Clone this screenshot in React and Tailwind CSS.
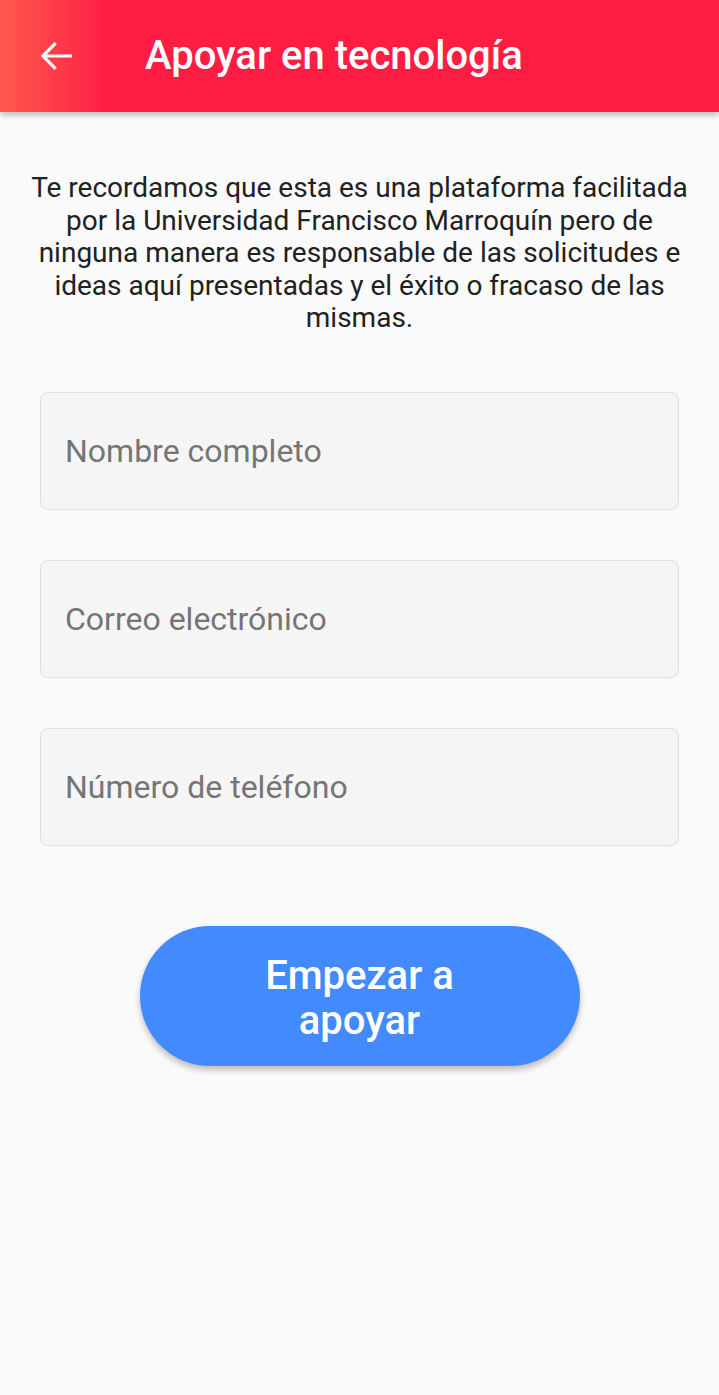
import React from "react";

const Field = ({ label }) => (
  <div className="h-[118px] rounded-[8px] border border-[#e0e0e0] bg-[#f5f5f5] flex items-center px-[24px]">
    <span className="text-[32px] text-[#757575]">{label}</span>
  </div>
);

const App = () => {
  return (
    <div className="min-h-[1395px] bg-[#fafafa] font-['Roboto',sans-serif]">
      <header className="h-[112px] flex items-center bg-[linear-gradient(90deg,#ff5a4c_0px,#ff1d43_110px,#ff1d43_100%)] shadow-[0_3px_6px_rgba(0,0,0,0.25)]">
        <div className="w-[112px] flex justify-center">
          {/* material arrow_back */}
          <svg width="48" height="48" viewBox="0 0 24 24" fill="#fff">
            <path d="M20 11.2H7.3l5.1-5.1-1.15-1.15L4.3 12l6.95 7.05 1.15-1.15-5.1-5.1H20z" />
          </svg>
        </div>
        <h1 className="ml-[33px] text-[40px] font-medium text-white leading-none">Apoyar en tecnología</h1>
      </header>

      <div className="px-[30px] pt-[60px] text-center text-[28px] leading-[32.5px] text-[#212121]">
        Te recordamos que esta es una plataforma facilitada por la Universidad Francisco Marroquín pero de ninguna manera es responsable de las solicitudes e ideas aquí presentadas y el éxito o fracaso de las mismas.
      </div>

      <div className="px-[40px] pt-[57px] flex flex-col gap-[50px]">
        <Field label="Nombre completo" />
        <Field label="Correo electrónico" />
        <Field label="Número de teléfono" />
      </div>

      <div className="flex justify-center pt-[80px]">
        <button className="w-[440px] h-[140px] rounded-full bg-[#448aff] text-white text-[40px] font-medium leading-[45px] px-[100px] pt-[4px] shadow-[0_4px_6px_rgba(0,0,0,0.25)]">
          Empezar a apoyar
        </button>
      </div>
    </div>
  );
};

export default App;
